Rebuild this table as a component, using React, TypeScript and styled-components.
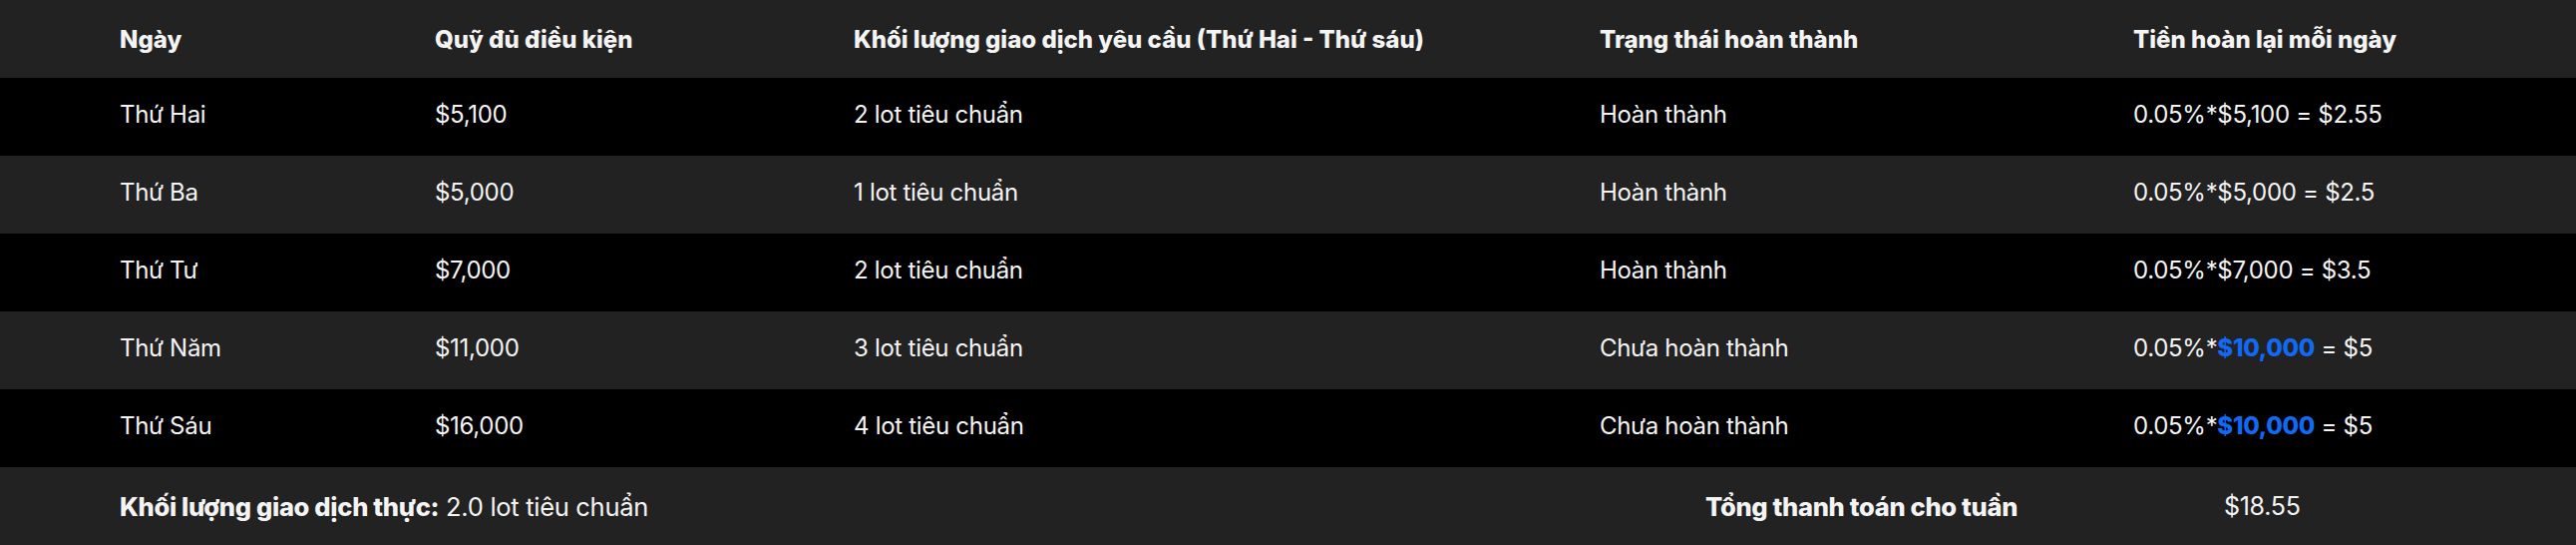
import styled, { createGlobalStyle } from "styled-components";

const GlobalStyle = createGlobalStyle`
  html, body {
    margin: 0;
    padding: 0;
    background: #000;
  }
  body {
    font-family: Inter, "Noto Sans", sans-serif;
    color: #f4f4f4;
  }
`

const Table = styled.div`
  width: 100%;
  display: flex;
  flex-direction: column;
`

const Row = styled.div<{ $dark?: boolean }>`
  height: 78px;
  display: grid;
  grid-template-columns: 316px 420px 748px 535px 1fr;
  align-items: center;
  padding-left: 120px;
  background-color: ${(p) => (p.$dark ? "#000000" : "#232223")};
`

const HeadCell = styled.div`
  font-size: 24px;
  font-weight: 800;
  letter-spacing: 0;
  white-space: nowrap;
`

const Cell = styled.div`
  font-size: 24px;
  font-weight: 400;
  letter-spacing: -0.3px;
  white-space: nowrap;
  padding-bottom: 5px;
`

const Highlight = styled.span`
  color: #1169f4;
  font-weight: 800;
`

const FooterNote = styled(Cell)`
  grid-column: 1 / 4;
  font-size: 25.5px;
  padding-bottom: 0;
`

const Strong = styled.span`
  font-weight: 800;
`

const TotalLabel = styled(HeadCell)`
  justify-self: center;
  font-size: 25.5px;
  letter-spacing: -0.3px;
  padding-right: 10px;
`

const TotalValue = styled(Cell)`
  padding-left: 91px;
  padding-bottom: 0;
  font-size: 25px;
`

interface IDay {
  day: string
  fund: string
  volume: string
  status: string
  base: string
  capped?: boolean
  result: string
}

const days: IDay[] = [
  { day: "Thứ Hai", fund: "$5,100", volume: "2 lot tiêu chuẩn", status: "Hoàn thành", base: "$5,100", result: "$2.55" },
  { day: "Thứ Ba", fund: "$5,000", volume: "1 lot tiêu chuẩn", status: "Hoàn thành", base: "$5,000", result: "$2.5" },
  { day: "Thứ Tư", fund: "$7,000", volume: "2 lot tiêu chuẩn", status: "Hoàn thành", base: "$7,000", result: "$3.5" },
  { day: "Thứ Năm", fund: "$11,000", volume: "3 lot tiêu chuẩn", status: "Chưa hoàn thành", base: "$10,000", capped: true, result: "$5" },
  { day: "Thứ Sáu", fund: "$16,000", volume: "4 lot tiêu chuẩn", status: "Chưa hoàn thành", base: "$10,000", capped: true, result: "$5" },
]

const App = () => {
  return (
    <>
      <GlobalStyle />
      <Table>
        <Row>
          <HeadCell>Ngày</HeadCell>
          <HeadCell>Quỹ đủ điều kiện</HeadCell>
          <HeadCell>Khối lượng giao dịch yêu cầu (Thứ Hai - Thứ sáu)</HeadCell>
          <HeadCell>Trạng thái hoàn thành</HeadCell>
          <HeadCell>Tiền hoàn lại mỗi ngày</HeadCell>
        </Row>
        {days.map((d, i) => (
          <Row key={d.day} $dark={i % 2 === 0}>
            <Cell>{d.day}</Cell>
            <Cell>{d.fund}</Cell>
            <Cell>{d.volume}</Cell>
            <Cell>{d.status}</Cell>
            <Cell>
              0.05%*{d.capped ? <Highlight>{d.base}</Highlight> : d.base} = {d.result}
            </Cell>
          </Row>
        ))}
        <Row>
          <FooterNote>
            <Strong>Khối lượng giao dịch thực:</Strong> 2.0 lot tiêu chuẩn
          </FooterNote>
          <TotalLabel>Tổng thanh toán cho tuần</TotalLabel>
          <TotalValue>$18.55</TotalValue>
        </Row>
      </Table>
    </>
  );
}

export default App;
